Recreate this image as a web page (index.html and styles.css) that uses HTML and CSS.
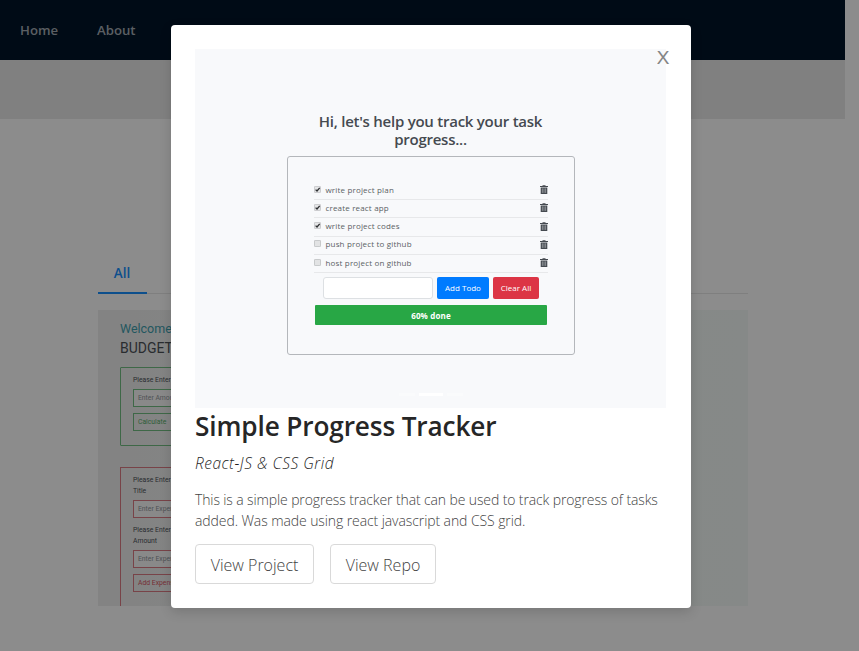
FILE: index.html
```html
<!DOCTYPE html>
<html lang="en">
<head>
<meta charset="utf-8">
<title>Projects</title>
<link rel="stylesheet" href="styles.css">
</head>
<body>
<div class="page">
  <nav class="nav"><a class="home">Home</a><a class="about">About</a></nav>
  <div class="band"></div>
  <main class="content">
    <div class="tabs"><div class="tab">All</div></div>
    <section class="budget">
      <div class="budget-main">
        <div class="welcome">Welcome</div>
        <div class="budget-title">BUDGET</div>
        <div class="panel green">
          <label>Please Enter</label>
          <div class="field">Enter Amount</div>
          <div class="field action">Calculate</div>
        </div>
        <div class="panel red">
          <label>Please Enter<br>Title</label>
          <div class="field">Enter Expense</div>
          <label>Please Enter<br>Amount</label>
          <div class="field">Enter Expense</div>
          <div class="field action">Add Expense</div>
        </div>
      </div>
    </section>
  </main>
</div>
<svg class="defs" width="0" height="0">
  <symbol id="trash" viewBox="0 0 8 9"><path fill="#454a50" d="M0 1h2.5V.2h3V1H8v1H0zM.7 2.4h6.6V9H.7z"/><path fill="none" stroke="#b9bcc0" stroke-width=".6" d="M2.4 3.4v4.5M4 3.4v4.5M5.6 3.4v4.5"/></symbol>
  <symbol id="checked" viewBox="0 0 7 7"><rect x=".4" y=".4" width="6.2" height="6.2" rx=".8" fill="#e4e5e6" stroke="#b7b9bb" stroke-width=".7"/><path d="M1.6 3.6 3 5 5.7 1.8" fill="none" stroke="#2d2f32" stroke-width="1.3"/></symbol>
  <symbol id="unchecked" viewBox="0 0 7 7"><rect x=".4" y=".4" width="6.2" height="6.2" rx=".8" fill="#e2e3e4" stroke="#b2b4b6" stroke-width=".7"/></symbol>
</svg>
<div class="mask">
  <div class="modal">
    <div class="close">X</div>
    <div class="shot">
      <div class="hi"><div>Hi, let's help you track your task</div><div>progress...</div></div>
      <div class="todo">
        <div class="row"><svg class="box"><use href="#checked"/></svg><span>write project plan</span><svg class="bin"><use href="#trash"/></svg></div>
        <div class="row"><svg class="box"><use href="#checked"/></svg><span>create react app</span><svg class="bin"><use href="#trash"/></svg></div>
        <div class="row"><svg class="box"><use href="#checked"/></svg><span>write project codes</span><svg class="bin"><use href="#trash"/></svg></div>
        <div class="row"><svg class="box"><use href="#unchecked"/></svg><span>push project to github</span><svg class="bin"><use href="#trash"/></svg></div>
        <div class="row"><svg class="box"><use href="#unchecked"/></svg><span>host project on github</span><svg class="bin"><use href="#trash"/></svg></div>
        <div class="form"><div class="input"></div><div class="add">Add Todo</div><div class="clear">Clear All</div></div>
        <div class="progress">60% done</div>
      </div>
      <div class="dots"><i></i><i class="on"></i><i></i></div>
    </div>
    <h1>Simple Progress Tracker</h1>
    <div class="tech">React-JS &amp; CSS Grid</div>
    <p><span class="l1">This is a simple progress tracker that can be used to track progress of tasks</span><br><span class="l2">added. Was made using react javascript and CSS grid.</span></p>
    <div class="buttons"><a class="b1">View Project</a><a class="b2">View Repo</a></div>
  </div>
</div>
</body>
</html>
```
FILE: styles.css
```css
* { box-sizing: border-box; }
body { margin: 0; width: 859px; height: 651px; overflow: hidden; background: #fff; font-family: "Open Sans", "Noto Sans", sans-serif; }
.page { height: 651px; }
.nav { width: 845px; height: 60px; background: #001529; display: flex; align-items: center; padding-left: 20px; font-size: 13.2px; font-weight: 600; color: #a6adb4; line-height: 20px; }
.home { width: 77px; }
.band { width: 845px; height: 59px; background: #e9e9e9; }
.content { width: 650px; margin: 134px 0 0 98px; }
.tabs { height: 41px; border-bottom: 1px solid #e8e8e8; }
.tab { width: 49px; height: 41px; border-bottom: 2px solid #1890ff; color: #1890ff; text-align: center; font-size: 13.5px; font-weight: 600; line-height: 40px; padding-right: 1px; }
.budget { margin-top: 16px; height: 296px; padding: 10px 0 0 22px; background: linear-gradient(90deg, #eeeeee, #f2f4f3 30%, #f4faf7); overflow: hidden; }
.budget-main { width: 240px; font-family: Roboto, sans-serif; }
.welcome { font-size: 12.5px; line-height: 17px; color: #3f9fae; }
.budget-title { font-size: 14px; line-height: 22px; letter-spacing: 0; color: #4c5157; }
.panel { border: 1px solid; padding: 7px 12px; font-size: 6.8px; line-height: 11px; color: #4c5157; }
.panel label { display: block; }
.green { border-color: #71be81; height: 79px; margin-top: 8px; border-radius: 1px; }
.red { border-color: #da7b84; height: 160px; margin-top: 21px; }
.field { border: 1px solid; background: #fafafa; height: 18px; margin: 3px 0 6px; padding: 0 4px; line-height: 16px; color: #90969b; }
.green .field { border-color: #71be81; }
.red .field { border-color: #da7b84; margin: 3px 0 6.7px; }
.field.action { background: transparent; }
.green .action { color: #55ad67; }
.red .action { color: #d65764; }
.defs { position: absolute; }
.mask { position: absolute; inset: 0; background: rgba(0,0,0,.45); padding: 25px 168px 0 171px; }
.modal { position: relative; width: 520px; height: 583px; padding: 24px; background: #fff; border-radius: 4px; box-shadow: 0 4px 12px rgba(0,0,0,.15); }
.close { position: absolute; left: 486px; top: 22px; font-size: 18px; line-height: 20px; color: #858585; font-family: "Noto Sans", "Open Sans", sans-serif; font-weight: 400; transform: scaleX(1.15); transform-origin: left; }
.shot { width: 471px; height: 359px; background: #f8f9fb; padding-top: 63px; }
.hi { text-align: center; font-size: 15px; font-weight: 600; line-height: 18px; letter-spacing: -.25px; color: #454a50; }
.todo { margin: 8px 0 0 92px; width: 288px; height: 199px; border: 1px solid #b4b7bb; border-radius: 3px; padding: 25px 26px 0; }
.row { height: 18.2px; width: 234px; border-bottom: 1px solid #e7e8ea; display: flex; align-items: center; font-size: 8px; color: #5a5f64; padding-bottom: 1.6px; }
.row span { flex: 1; padding-left: 4.5px; line-height: 12px; letter-spacing: .17px; white-space: nowrap; }
.box { width: 7px; height: 7px; margin-top: -1px; }
.bin { width: 8px; height: 9px; }
.form { margin: 4.5px 0 0 9px; height: 21.5px; display: flex; color: #fff; font-size: 8px; line-height: 22px; text-align: center; }
.input { width: 110px; border: 1px solid #dde0e3; background: #fff; border-radius: 3px; }
.add { width: 52px; margin-left: 4px; background: #007bff; border-radius: 2px; }
.clear { width: 46px; margin-left: 4px; background: #dc3545; border-radius: 2px; }
.progress { width: 232px; height: 20px; margin: 6.5px 0 0 1px; background: #28a745; border-radius: 1px; color: #fff; font-size: 8px; letter-spacing: .15px; font-weight: 700; line-height: 21px; text-align: center; }
.dots { display: flex; justify-content: center; gap: 4px; margin-top: 38px; }
.dots i { width: 16px; height: 3px; background: #fafbfc; }
.dots .on { width: 24px; background: #fff; }
h1 { margin: 0; font-size: 26.2px; font-weight: 600; line-height: 37px; letter-spacing: -.13px; color: #262626; white-space: nowrap; }
.tech { margin-top: 6px; font-size: 15.5px; font-style: italic; font-weight: 300; line-height: 25px; letter-spacing: .5px; color: #1f1f1f; }
p { margin: 13px 0 0; font-size: 14px; font-weight: 300; line-height: 21px; letter-spacing: -.12px; color: #434343; white-space: nowrap; }
.l2 { letter-spacing: -.09px; }
.buttons { margin-top: 13px; display: flex; gap: 16px; font-size: 16px; font-weight: 300; color: #434343; line-height: 41px; text-align: center; }
.buttons a { height: 40px; border: 1px solid #d9d9d9; border-radius: 4px; white-space: nowrap; }
.b1 { width: 119px; }
.b2 { width: 106px; }
```
